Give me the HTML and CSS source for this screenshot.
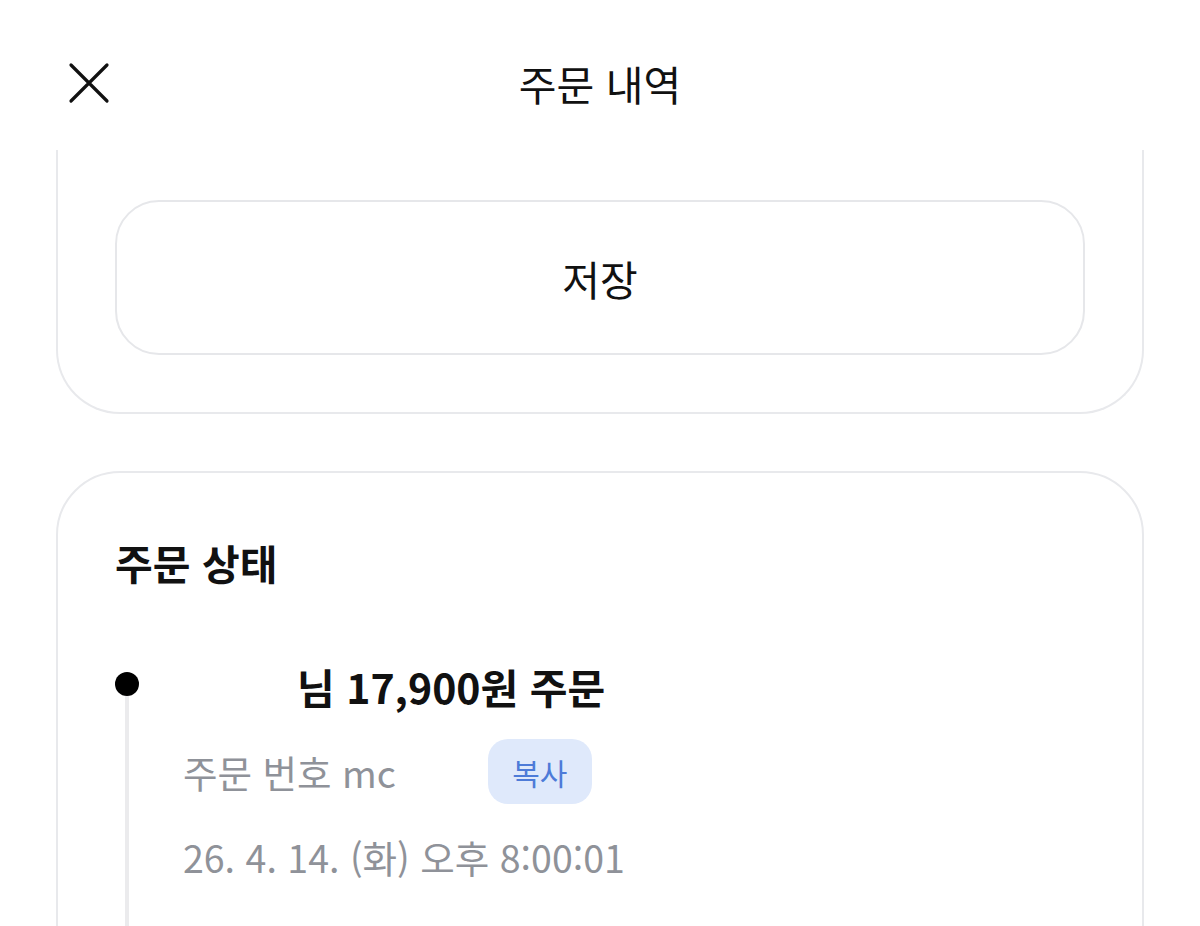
FILE: index.html
```html
<!DOCTYPE html>
<html lang="ko">
<head>
<meta charset="utf-8">
<title>주문 내역</title>
<link rel="stylesheet" href="styles.css">
</head>
<body>
<div class="app">
  <header class="topbar">
    <button class="close" aria-label="닫기">
      <svg width="42" height="42" viewBox="0 0 42 42"><path d="M3 3 L39 39 M39 3 L3 39" stroke="#111" stroke-width="3.2" stroke-linecap="round" fill="none"/></svg>
    </button>
    <h1 class="title">주문 내역</h1>
    <span class="spacer"></span>
  </header>
  <main class="content">
    <section class="card card-clipped">
      <button class="save-btn">저장</button>
    </section>
    <section class="card status-card">
      <h2 class="card-title">주문 상태</h2>
      <div class="timeline">
        <div class="tl-item">
          <div class="tl-rail"><span class="tl-dot"></span><span class="tl-line"></span></div>
          <div class="tl-body">
            <p class="tl-title"><span class="redacted-name"></span>님 17,900원 주문</p>
            <div class="tl-row">
              <span class="tl-meta">주문 번호 mc</span><span class="redacted-no"></span>
              <button class="copy-btn">복사</button>
            </div>
            <p class="tl-meta tl-date">26. 4. 14. (화) 오후 8:00:01</p>
          </div>
        </div>
      </div>
    </section>
  </main>
</div>
</body>
</html>
```
FILE: styles.css
```css
* { box-sizing: border-box; }
html, body { margin: 0; padding: 0; background: #fff; }
body {
  font-family: "Noto Sans CJK KR", "Noto Sans", sans-serif;
  color: #111;
  width: 1200px;
  height: 926px;
  overflow: hidden;
}
.app { display: flex; flex-direction: column; }
.topbar {
  height: 150px;
  display: grid;
  grid-template-columns: 1fr auto 1fr;
  align-items: start;
  padding-top: 62px;
}
.close {
  justify-self: start;
  margin-left: 68px;
  width: 42px; height: 42px;
  padding: 0; border: 0; background: none;
  display: flex;
}
.title {
  margin: 0;
  margin-top: 1px;
  font-size: 41px;
  line-height: 41px;
  font-weight: 400;
  color: #111;
}
.content {
  display: flex;
  flex-direction: column;
  gap: 57px;
  padding: 0 56px;
}
.card {
  border: 2px solid #e8e9ec;
  border-radius: 64px;
  background: #fff;
}
.card-clipped {
  border-top: 0;
  border-top-left-radius: 0;
  border-top-right-radius: 0;
  padding: 50px 57px 57px;
}
.save-btn {
  display: block;
  width: 100%;
  height: 155px;
  border: 2px solid #e6e7ea;
  border-radius: 44px;
  background: #fff;
  font-family: inherit;
  font-size: 41px;
  color: #111;
  padding: 0;
}
.status-card {
  padding: 69px 57px 0;
  height: 480px;
  border-bottom-left-radius: 0;
  border-bottom-right-radius: 0;
}
.card-title {
  margin: 0 0 83px;
  font-size: 41px;
  line-height: 41px;
  font-weight: 700;
}
.tl-item {
  display: grid;
  grid-template-columns: 68px 1fr;
}
.tl-rail {
  display: flex;
  flex-direction: column;
  align-items: center;
  width: 24px;
  padding-top: 6px;
}
.tl-dot {
  width: 24px; height: 24px;
  border-radius: 50%;
  background: #000;
  flex: none;
}
.tl-line {
  width: 4px;
  height: 260px;
  background: #ebebed;
}
.tl-body { display: flex; flex-direction: column; }
.tl-title {
  margin: 0;
  font-size: 41px;
  line-height: 41px;
  font-weight: 700;
}
.redacted-name { display: inline-block; width: 114px; }
.tl-row {
  display: flex;
  align-items: center;
  margin-top: 32px;
}
.tl-meta {
  font-size: 37.5px;
  line-height: 37.5px;
  color: #8f9299;
  margin: 0;
}
.redacted-no { display: inline-block; width: 92px; height: 10px; }
.copy-btn {
  width: 104px;
  height: 65px;
  border: 0;
  border-radius: 20px;
  background: #dfe9fb;
  color: #4d7bd8;
  font-family: inherit;
  font-size: 30px;
  padding: 0;
}
.tl-date { margin-top: 34px; }
```
